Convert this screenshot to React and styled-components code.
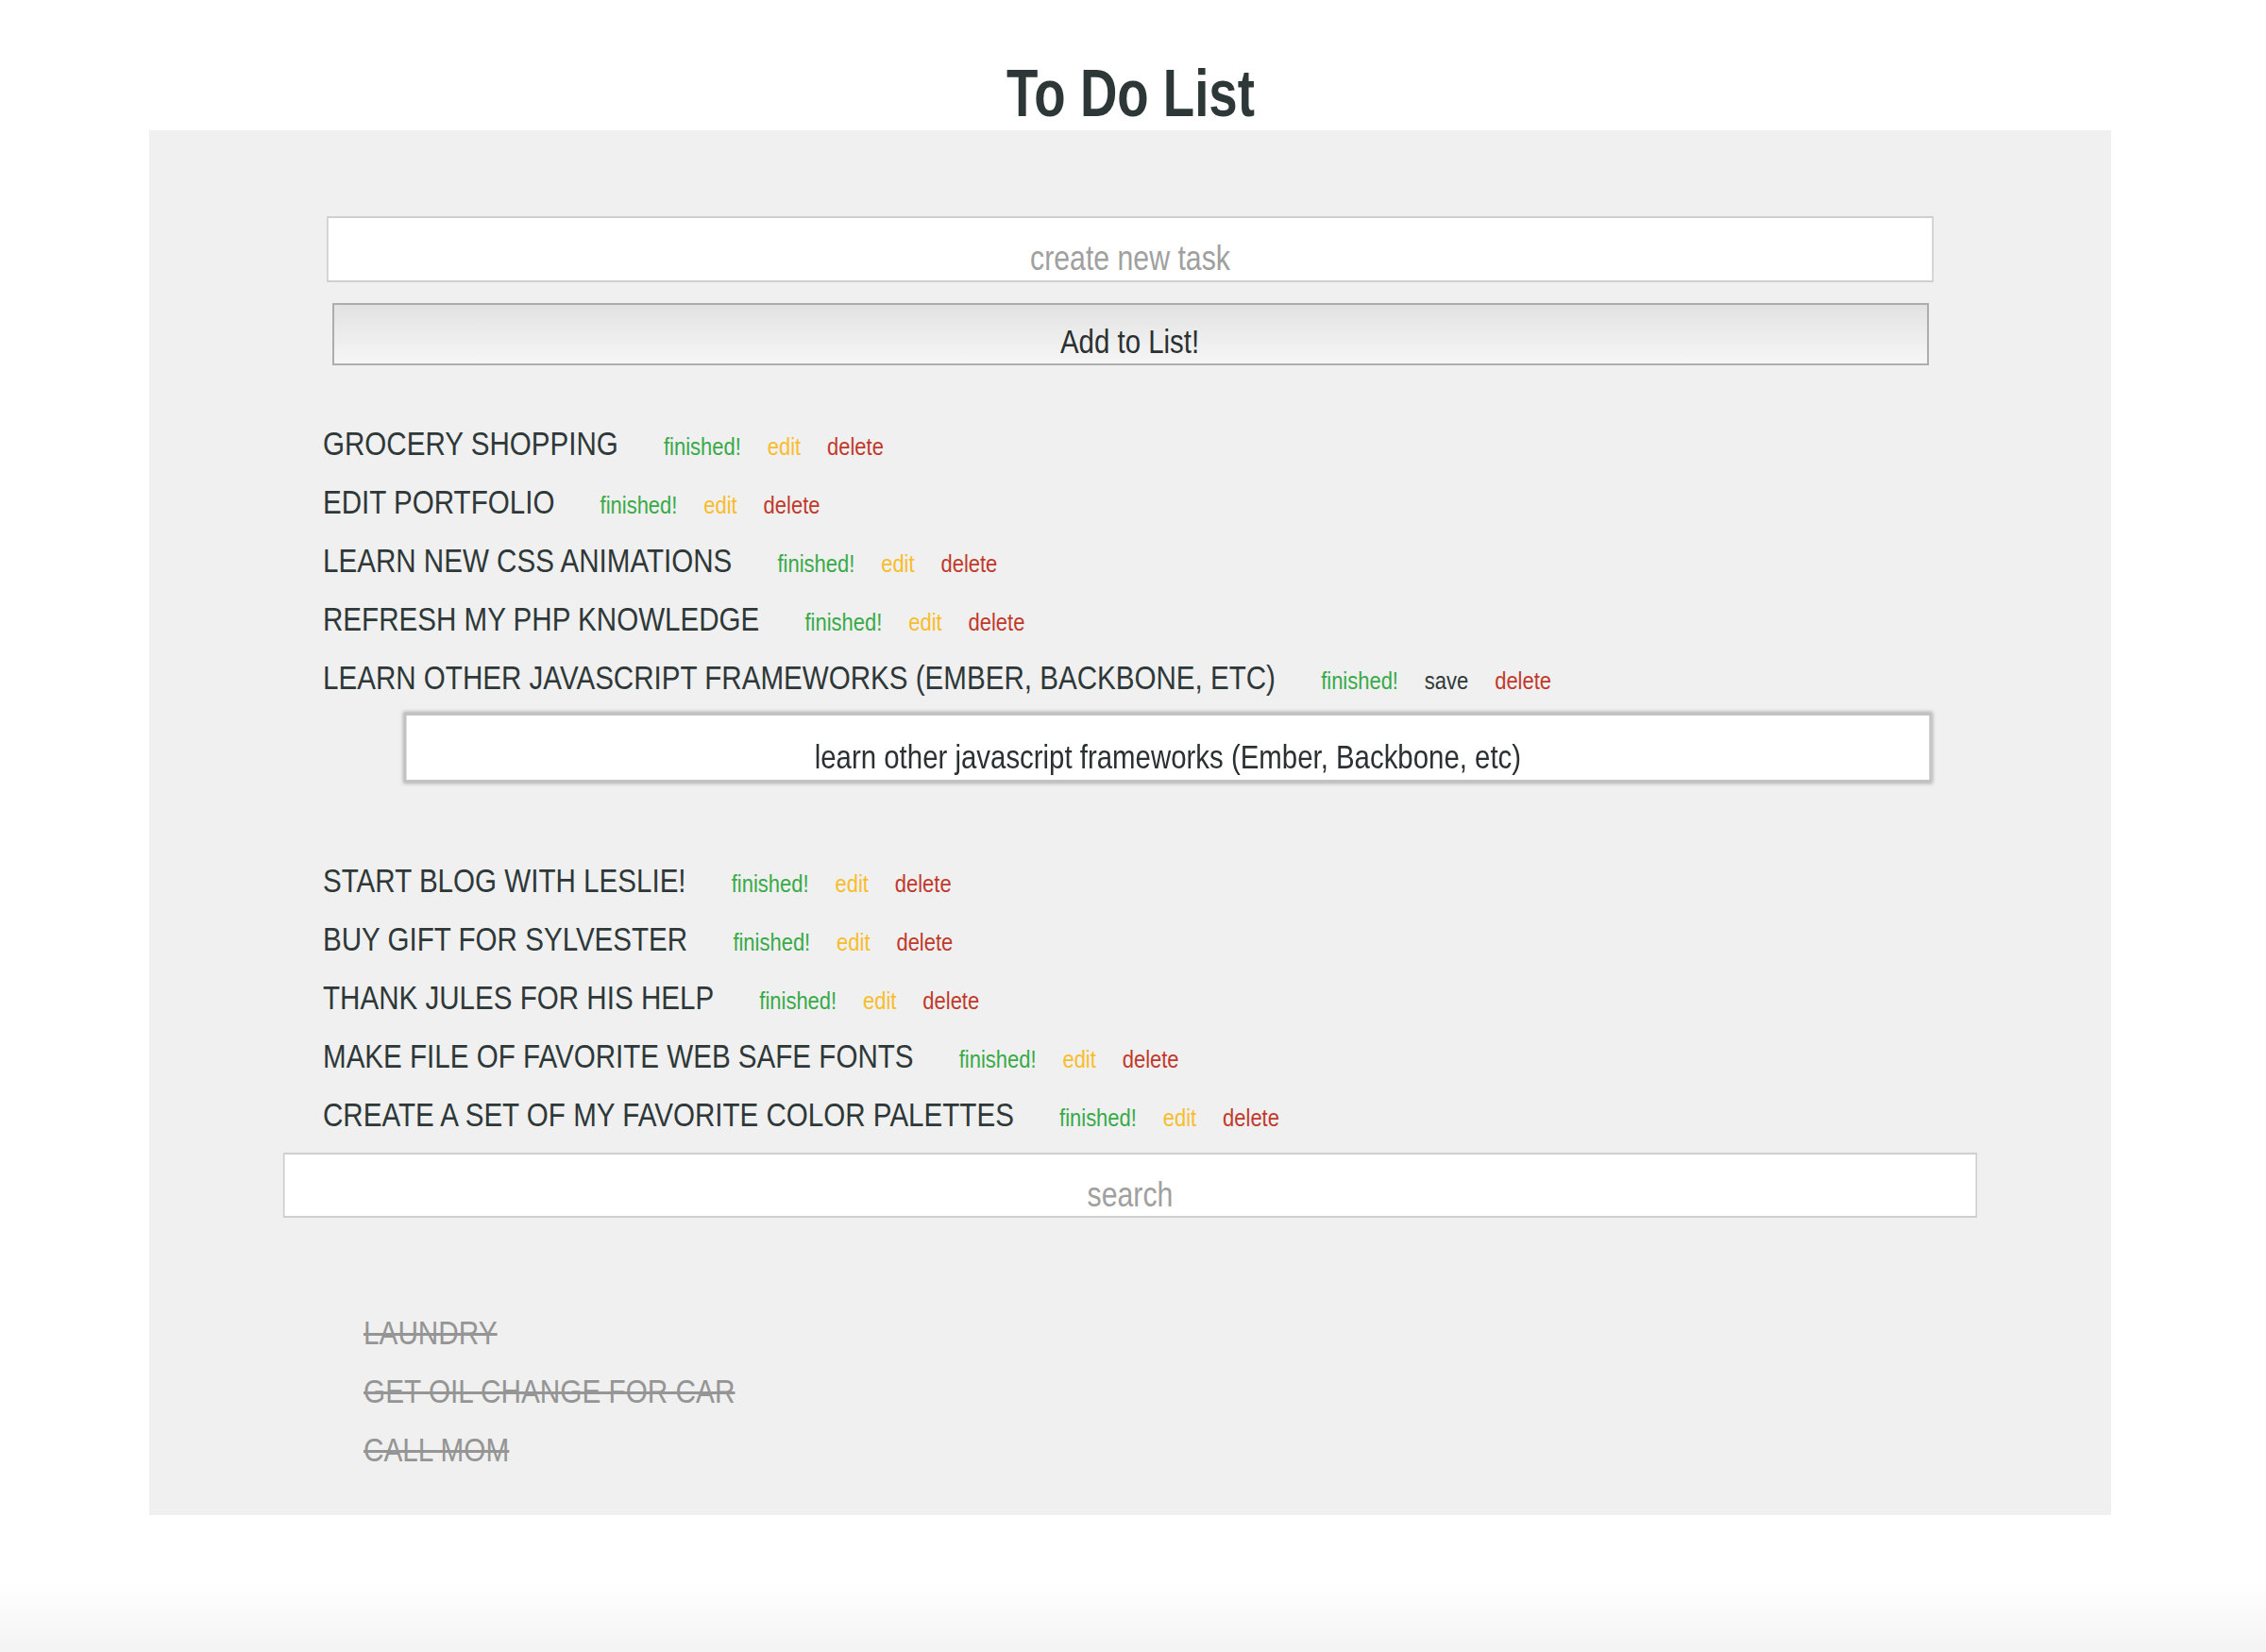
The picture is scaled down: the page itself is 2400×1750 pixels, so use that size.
import React, { useEffect, useRef } from 'react'
import styled, { createGlobalStyle } from 'styled-components'

// no narrow face in the sandbox: Liberation Sans squeezed horizontally stands in for Arial Narrow
const SANS = `'Liberation Sans Narrow', 'Liberation Sans', Arial, sans-serif`
const NARROW = 0.84

const GlobalStyle = createGlobalStyle`
  html, body {
    margin: 0;
    padding: 0;
  }
  body {
    min-height: 1750px;
    font-family: ${SANS};
    background: linear-gradient(to bottom, #ffffff 0, #ffffff 1675px, #f3f3f3 1750px);
    overflow-x: hidden;
  }
`

const TONES = {
  done: '#38aa48',
  edit: '#f8bd2c',
  save: '#2f3838',
  remove: '#c0392b'
}

const Squeeze = styled.span`
  display: inline-block;
  transform: scaleX(${(p) => p.$x || NARROW});
  transform-origin: ${(p) => p.$origin || 'center'};
`

const Page = styled.div`
  width: 2078px;
  margin-left: 158px;
  padding-top: 64px;
`

const Title = styled.h1`
  margin: 0 0 4px;
  font-family: ${SANS};
  font-weight: bold;
  font-size: 70px;
  line-height: 70px;
  text-align: center;
  color: #2e3737;
`

const Panel = styled.section`
  display: flex;
  flex-direction: column;
  background: #f0f0f0;
  padding: 91px 0 38px;
`

const Field = styled.input`
  box-sizing: border-box;
  flex-shrink: 0;
  align-self: center;
  width: ${(p) => Math.round(p.$width / NARROW)}px;
  height: ${(p) => p.$height}px;
  margin-top: ${(p) => p.$top || 0}px;
  padding: 20px 0 0;
  border: 2px solid #cfcfcf;
  background: #fff;
  font-family: ${SANS};
  font-size: 36px;
  color: #2f3838;
  text-align: center;
  outline: none;
  transform: scaleX(${NARROW});
  &::placeholder {
    color: #a0a0a0;
  }
`

const AddButton = styled.button`
  box-sizing: border-box;
  align-self: center;
  width: 1691px;
  height: 66px;
  margin-top: 22px;
  padding: 16px 0 0;
  border: 2px solid #adadad;
  background: linear-gradient(to bottom, #e2e2e2, #f6f6f6);
  font-family: ${SANS};
  font-size: 35px;
  color: #2b3131;
  cursor: pointer;
`

const TaskList = styled.ul`
  list-style: none;
  margin: 52px 0 0;
  padding: 0 0 0 184px;
`

const TaskRow = styled.li`
  display: flex;
  align-items: baseline;
  height: 62px;
  line-height: 62px;
  font-size: 35px;
  color: #2f3838;
  text-transform: uppercase;
  white-space: nowrap;
  transform: scaleX(0.845);
  transform-origin: left center;
`

const Actions = styled.span`
  display: flex;
  align-items: baseline;
  gap: 33px;
  margin-left: 57px;
  text-transform: none;
`

const Action = styled.span`
  font-size: 26px;
  color: ${(p) => TONES[p.$tone]};
  cursor: pointer;
`

const EditField = styled.input`
  box-sizing: border-box;
  display: block;
  width: ${Math.round(1618 / NARROW)}px;
  height: 74px;
  margin: 6px 0 73px 86px;
  padding: 20px 0 0;
  border: 3px solid #c2c2c2;
  box-shadow: 0 0 4px 1px rgba(0, 0, 0, 0.28);
  background: #fff;
  font-family: ${SANS};
  font-size: 35px;
  color: #2b3131;
  text-align: center;
  outline: none;
  caret-color: #222;
  transform: scaleX(${NARROW});
  transform-origin: left center;
`

const DoneList = styled.ul`
  list-style: none;
  margin: 91px 0 0;
  padding: 0 0 0 227px;
`

const DoneRow = styled.li`
  height: 62px;
  line-height: 62px;
  font-size: 35px;
  color: #959595;
  text-transform: uppercase;
  text-decoration: line-through;
  text-decoration-thickness: 3px;
  white-space: nowrap;
  transform: scaleX(0.85);
  transform-origin: left center;
`

const tasks = [
  { id: 1, text: 'grocery shopping' },
  { id: 2, text: 'edit portfolio' },
  { id: 3, text: 'learn new css animations' },
  { id: 4, text: 'refresh my php knowledge' },
  { id: 5, text: 'learn other javascript frameworks (Ember, Backbone, etc)', editing: true },
  { id: 6, text: 'start blog with Leslie!' },
  { id: 7, text: 'buy gift for Sylvester' },
  { id: 8, text: 'thank Jules for his help' },
  { id: 9, text: 'make file of favorite web safe fonts' },
  { id: 10, text: 'create a set of my favorite color palettes' }
]

const finished = ['laundry', 'get oil change for car', 'call mom']

const EditBox = ({ value }) => {
  const ref = useRef(null)
  useEffect(() => {
    const el = ref.current
    if (!el) return
    el.focus()
    el.setSelectionRange(value.length, value.length)
  }, [value])
  return <EditField ref={ref} defaultValue={value} />
}

const Task = ({ task }) => (
  <>
    <TaskRow>
      {task.text}
      <Actions>
        <Action $tone='done'>finished!</Action>
        {task.editing ? (
          <Action $tone='save'>save</Action>
        ) : (
          <Action $tone='edit'>edit</Action>
        )}
        <Action $tone='remove'>delete</Action>
      </Actions>
    </TaskRow>
    {task.editing && (
      <li>
        <EditBox value={task.text} />
      </li>
    )}
  </>
)

const App = () => {
  return (
    <>
      <GlobalStyle />
      <Page>
        <Title>
          <Squeeze $x={0.78}>To Do List</Squeeze>
        </Title>
        <Panel>
          <Field $width={1702} $height={70} placeholder='create new task' />
          <AddButton type='button'>
            <Squeeze>Add to List!</Squeeze>
          </AddButton>

          <TaskList>
            {tasks.map((task) => (
              <Task key={task.id} task={task} />
            ))}
          </TaskList>

          <Field $width={1794} $height={69} $top={9} placeholder='search' />

          <DoneList>
            {finished.map((item) => (
              <DoneRow key={item}>{item}</DoneRow>
            ))}
          </DoneList>
        </Panel>
      </Page>
    </>
  )
}

export default App
